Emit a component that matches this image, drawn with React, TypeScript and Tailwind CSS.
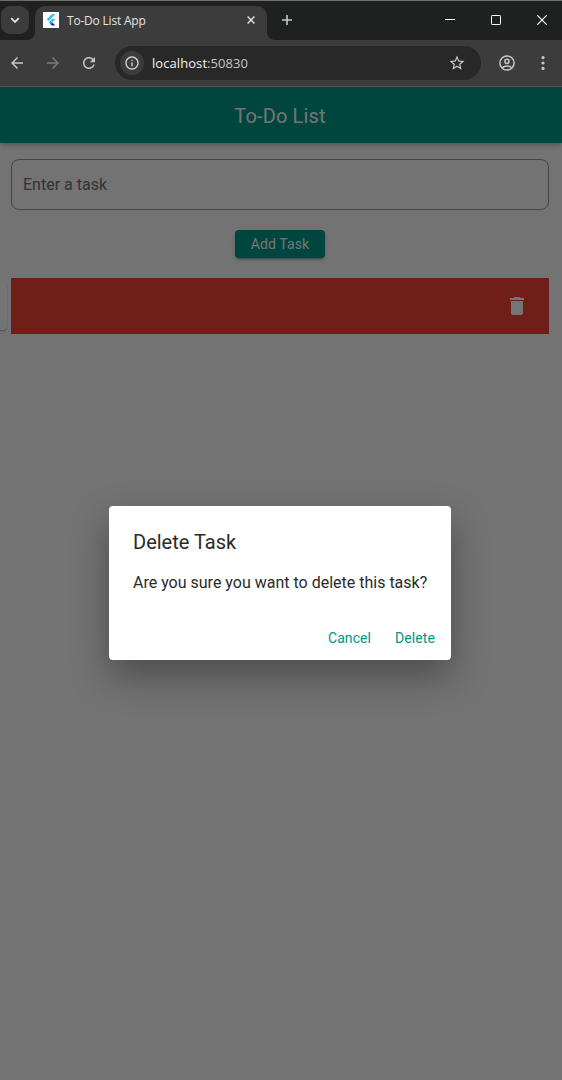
import type { ReactNode } from 'react';

function FlutterLogo() {
  return (
    <svg className="size-4 bg-white" viewBox="0 0 16 16">
      <path d="M9 2h3.4L5.6 9 3.7 7.4z" fill="#35bdf5" />
      <path d="M9 7h3.4L9 10.4 7.3 8.8z" fill="#35bdf5" />
      <path d="M5.8 10.4 7.5 8.7l1.8 1.8-1.8 1.8z" fill="#29a6e8" />
      <path d="m7.5 12.2 1.8-1.7 3 3.1H9z" fill="#0b2f96" />
    </svg>
  );
}

function TabCurve({ flip = false }: { flip?: boolean }) {
  return (
    <svg className={flip ? 'h-2 w-2 self-end -scale-x-100' : 'h-2 w-2 self-end'} viewBox="0 0 8 8">
      <path d="M8 0v8H0c4.4 0 8-3.6 8-8z" fill="#3c3c3c" />
    </svg>
  );
}

function TabStrip() {
  return (
    <div className="flex h-10 shrink-0 border-t border-[#6b706e] bg-[#1f2120] text-[#e3e3e3]">
      <div className="ml-px mt-[5px] flex h-7 w-7 shrink-0 items-center justify-center rounded-[9px] bg-[#3c3c3c]">
        <svg width="10" height="10" viewBox="0 0 10 10" fill="none" stroke="#e3e3e3" strokeWidth="1.8">
          <path d="m1.2 3.2 3.8 3.7 3.8-3.7" />
        </svg>
      </div>
      <div className="-ml-[2px] flex">
        <TabCurve />
        <div className="mt-[5px] flex h-[34px] w-[232px] items-center rounded-t-[10px] bg-[#3c3c3c] pb-[6px] pl-2">
          <FlutterLogo />
          <span className="ml-2 whitespace-nowrap pt-px font-['Open_Sans',sans-serif] text-[12px] leading-4 tracking-[-0.2px]">
            To-Do List App
          </span>
          <svg className="ml-auto mr-3" width="8" height="8" viewBox="0 0 8 8" stroke="#e3e3e3" strokeWidth="1.4">
            <path d="m.6.6 6.8 6.8M7.4.6.6 7.4" />
          </svg>
        </div>
        <TabCurve flip />
      </div>
      <svg className="ml-[7px] mt-[14px]" width="10" height="10" viewBox="0 0 10 10" stroke="#c7c7c7" strokeWidth="1.6">
        <path d="M5 0v10M0 5h10" />
      </svg>
      <div className="ml-auto mr-[15px] mt-[14px] flex h-[10px] gap-[36px]">
        <svg width="10" height="10" stroke="#fff">
          <path d="M0 4.5h10" />
        </svg>
        <svg width="10" height="10" fill="none" stroke="#fff">
          <rect x=".5" y=".5" width="9" height="9" rx=".7" />
        </svg>
        <svg width="10" height="10" stroke="#fff" strokeWidth="1.1">
          <path d="m.2.2 9.6 9.6M9.8.2.2 9.8" />
        </svg>
      </div>
    </div>
  );
}

function MaterialIcon({ size, color, children, className }: { size: number; color: string; children: ReactNode; className?: string }) {
  return (
    <svg className={className} width={size} height={size} viewBox="0 0 24 24" fill={color}>
      {children}
    </svg>
  );
}

function Toolbar() {
  return (
    <div className="flex h-[47px] shrink-0 items-center border-b border-[#505050] bg-[#3c3c3c]">
      <MaterialIcon size={18} color="#c7c7c7" className="ml-2 shrink-0">
        <path d="M20 11H7.83l5.59-5.59L12 4l-8 8 8 8 1.41-1.41L7.83 13H20v-2z" />
      </MaterialIcon>
      <MaterialIcon size={18} color="#7b7b7b" className="ml-[18px] shrink-0">
        <path d="m12 4-1.41 1.41L16.17 11H4v2h12.17l-5.58 5.59L12 20l8-8z" />
      </MaterialIcon>
      <MaterialIcon size={18} color="#c7c7c7" className="ml-[18px] shrink-0">
        <path d="M17.65 6.35C16.2 4.9 14.21 4 12 4c-4.42 0-7.99 3.58-7.99 8s3.57 8 7.99 8c3.73 0 6.84-2.55 7.73-6h-2.08c-.82 2.33-3.04 4-5.65 4-3.31 0-6-2.69-6-6s2.69-6 6-6c1.66 0 3.14.69 4.22 1.78L13 11h7V4l-2.35 2.35z" />
      </MaterialIcon>
      <div className="ml-[17px] flex h-[34px] w-[366px] shrink-0 items-center rounded-full bg-[#282828] pl-[5px] pr-[15px]">
        <div className="flex size-6 items-center justify-center rounded-full bg-[#3c3c3c]">
          <MaterialIcon size={16} color="#d5d5d5">
            <path d="M11 7h2v2h-2zm0 4h2v6h-2zm1-9C6.48 2 2 6.48 2 12s4.48 10 10 10 10-4.48 10-10S17.52 2 12 2zm0 18c-4.41 0-8-3.59-8-8s3.59-8 8-8 8 3.59 8 8-3.59 8-8 8z" />
          </MaterialIcon>
        </div>
        <span className="ml-2 font-['Open_Sans',sans-serif] text-[13px] leading-5 tracking-[0.07px] text-[#f2f2f2]">
          localhost<span className="text-[#c7c7c7]">:50830</span>
        </span>
        <MaterialIcon size={18} color="#c7c7c7" className="ml-auto">
          <path d="m22 9.24-7.19-.62L12 2 9.19 8.63 2 9.24l5.46 4.73L5.82 21 12 17.27 18.18 21l-1.63-7.03L22 9.24zM12 15.4l-3.76 2.27 1-4.28-3.32-2.88 4.38-.38L12 6.1l1.71 4.04 4.38.38-3.32 2.88 1 4.28L12 15.4z" />
        </MaterialIcon>
      </div>
      <svg className="ml-[18px] shrink-0" width="16" height="16" viewBox="0 0 16 16" fill="none" stroke="#c7c7c7" strokeWidth="1.5">
        <circle cx="8" cy="8" r="7.1" />
        <circle cx="8" cy="6.3" r="2.1" />
        <path d="M3.2 12.8c2.5-2.5 7.1-2.5 9.6 0" />
      </svg>
      <svg className="ml-[26px] shrink-0" width="4" height="14" viewBox="0 0 4 14" fill="#c7c7c7">
        <circle cx="2" cy="1.6" r="1.6" />
        <circle cx="2" cy="7" r="1.6" />
        <circle cx="2" cy="12.4" r="1.6" />
      </svg>
    </div>
  );
}

function TodoPage() {
  return (
    <div className="flex h-full flex-col bg-[#fafafa]">
      <header className="flex h-14 shrink-0 items-center justify-center bg-[#009688] pr-[2px] pt-px shadow-[0_2px_4px_-1px_rgba(0,0,0,0.2),0_3px_5px_rgba(0,0,0,0.12)]">
        <h1 className="text-[20px] font-[450] leading-6 tracking-[0.15px] text-white">To-Do List</h1>
      </header>
      <main className="flex flex-col pl-[11px] pr-[13px] pt-4">
        <div className="flex h-[51px] items-center rounded-lg border border-[#989898] pl-[11px] text-[16px] text-[#707070]">
          Enter a task
        </div>
        <button className="mt-5 flex h-7 w-[90px] items-center justify-center self-center rounded bg-[#009688] text-[14px] font-[450] tracking-[0.1px] text-white shadow-[0_3px_1px_-2px_rgba(0,0,0,0.2),0_2px_2px_rgba(0,0,0,0.14),0_1px_5px_rgba(0,0,0,0.12)]">
          Add Task
        </button>
        <div className="relative mt-5 flex h-14 items-center justify-end bg-[#f44336] pr-5">
          <div className="absolute -left-[19px] top-1 h-12 w-[15px] rounded bg-[#fdfdfd] shadow-[0_1px_1px_rgba(0,0,0,0.2),0_1px_2px_rgba(0,0,0,0.12)]" />
          <MaterialIcon size={24} color="#fff">
            <path d="M6 19c0 1.1.9 2 2 2h8c1.1 0 2-.9 2-2V7H6v12zM19 4h-3.5l-1-1h-5l-1 1H5v2h14V4z" />
          </MaterialIcon>
        </div>
      </main>
    </div>
  );
}

function DeleteDialog() {
  return (
    <div className="absolute inset-0 flex items-center justify-center bg-black/54 pb-px pr-[2px]">
      <div
        role="dialog"
        className="flex h-[154px] w-[342px] flex-col rounded bg-white pl-6 pr-4 pt-6 shadow-[0_16px_36px_rgba(0,0,0,0.34)]"
      >
        <h2 className="text-[20px] leading-6 text-[#2a2a2a]">Delete Task</h2>
        <p className="mt-[19px] whitespace-nowrap text-[16px] leading-5 text-[#2a2a2a]">
          Are you sure you want to delete this task?
        </p>
        <div className="mt-[35px] flex justify-end gap-6 text-[14px] leading-5 tracking-[0.08px] text-[#009688]">
          <button>Cancel</button>
          <button>Delete</button>
        </div>
      </div>
    </div>
  );
}

export default function App() {
  return (
    <div className="flex h-[1080px] w-[562px] flex-col overflow-hidden font-[Roboto,sans-serif]">
      <TabStrip />
      <Toolbar />
      <div className="relative min-h-0 flex-1 overflow-hidden">
        <TodoPage />
        <DeleteDialog />
      </div>
    </div>
  );
}
